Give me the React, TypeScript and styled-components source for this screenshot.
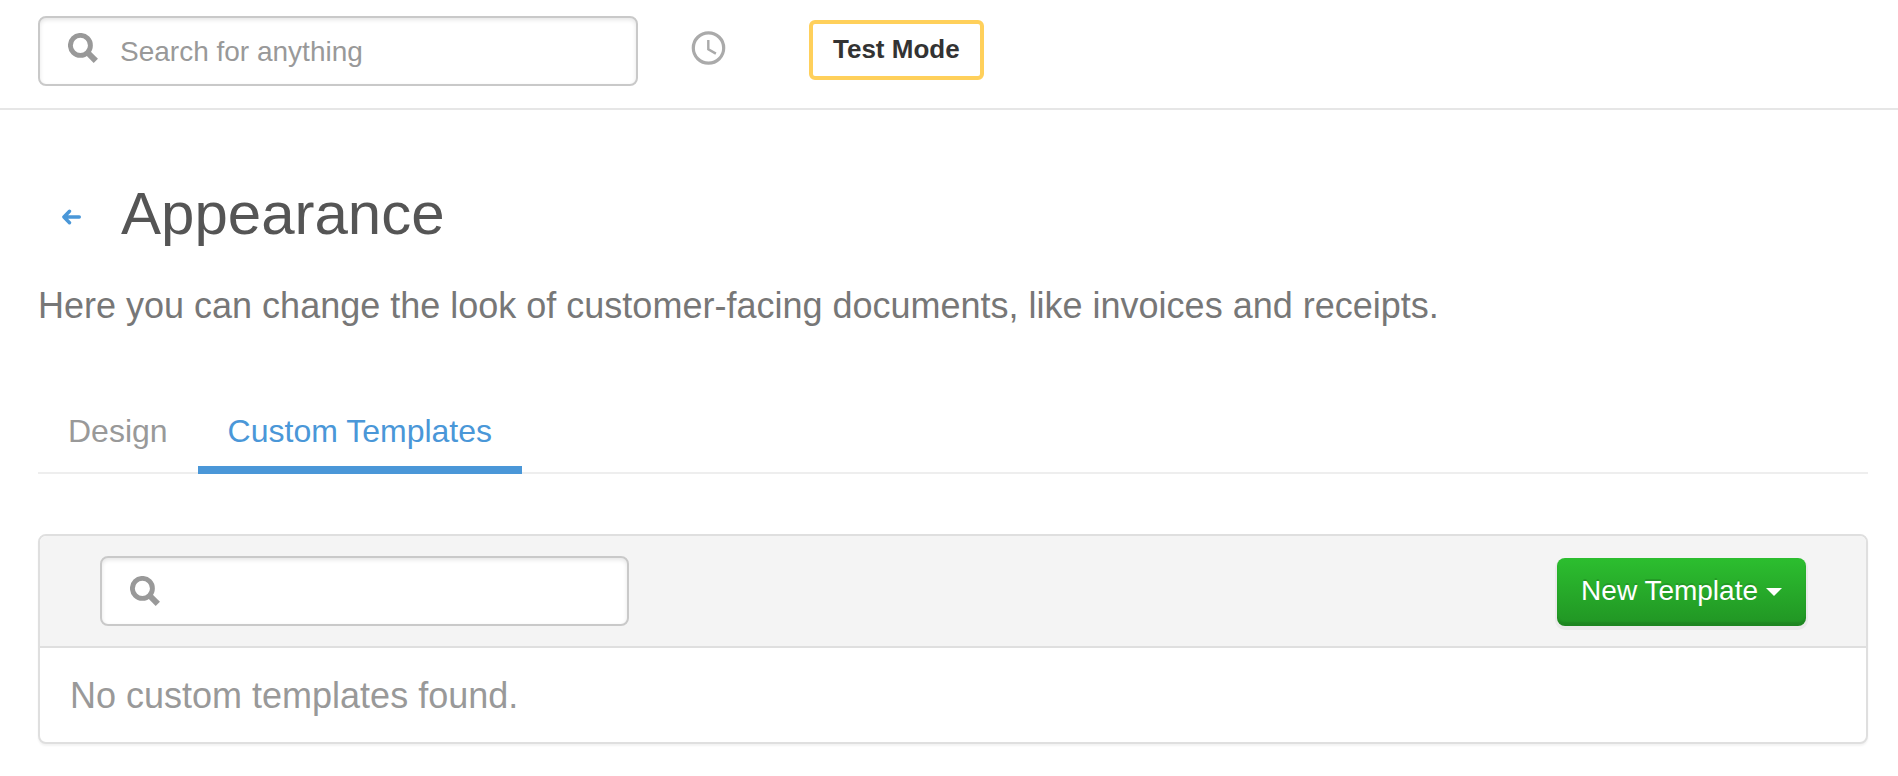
import React from 'react';
import styled, { createGlobalStyle, css } from 'styled-components';

const GlobalStyle = createGlobalStyle`
  * { box-sizing: border-box; }
  body {
    margin: 0;
    background: #fff;
    color: #555;
    font-family: "Liberation Sans", Arial, sans-serif;
    -webkit-font-smoothing: antialiased;
  }
  button, input { font-family: inherit; }
`;

const TopBar = styled.header`
  display: flex;
  align-items: flex-start;
  padding: 16px 38px 22px;
  border-bottom: 2px solid #e6e6e6;
`;

const SearchField = styled.label<{ $width: number; $raised?: boolean }>`
  display: flex;
  align-items: center;
  flex: 0 1 ${(p) => p.$width}px;
  height: 70px;
  padding: 0 28px;
  border: 2px solid #c9c9c9;
  border-radius: 8px;
  background: #fff;
  box-shadow: inset 0 2px 4px rgba(0, 0, 0, 0.1);
  color: #999;

  svg {
    flex: none;
    margin-bottom: ${(p) => (p.$raised ? 6 : 0)}px;
  }
`;

const SearchInput = styled.input`
  flex: 1;
  min-width: 0;
  height: 60px;
  margin-left: 22px;
  padding: 2px 0 0;
  border: 0;
  outline: 0;
  background: transparent;
  color: #555;
  font-size: 28px;
  &::placeholder { color: #999; opacity: 1; }
`;

const HistoryButton = styled.button`
  display: flex;
  margin: 14px 82px 0 52px;
  padding: 0;
  border: 0;
  background: none;
  color: #aaa;
  cursor: pointer;
`;

const ModeBadge = styled.button`
  height: 60px;
  margin-top: 4px;
  padding: 0 20px 2px;
  border: 4px solid #ffd05b;
  border-radius: 6px;
  background: #fff;
  color: #333;
  font-size: 26px;
  font-weight: 700;
  white-space: nowrap;
`;

const Page = styled.main`
  padding: 70px 30px 32px 38px;
`;

const TitleRow = styled.div`
  display: flex;
  align-items: center;
  padding-left: 24px;
`;

const BackLink = styled.a`
  display: flex;
  margin-right: 40px;
  padding-top: 6px;
  color: #4a97d8;
`;

const Title = styled.h1`
  margin: 0;
  color: #555;
  font-size: 60px;
  line-height: 68px;
  font-weight: 400;
`;

const Lead = styled.p`
  margin: 36px 0 0;
  color: #777;
  font-size: 36px;
  line-height: 44px;
`;

const Tabs = styled.nav`
  display: flex;
  height: 84px;
  margin-top: 62px;
  border-bottom: 2px solid #eee;
`;

const Tab = styled.a<{ $active?: boolean }>`
  height: 84px;
  padding: 20px 30px 0;
  border-bottom: 8px solid transparent;
  color: #999;
  font-size: 32px;
  line-height: 42px;
  text-decoration: none;
  ${(p) => p.$active && css`
    border-bottom-color: #4a97d8;
    color: #4a97d8;
  `}
`;

const Card = styled.section`
  margin-top: 60px;
  border: 2px solid #dfdfdf;
  border-radius: 8px;
  background: #fff;
  box-shadow: 0 2px 2px rgba(0, 0, 0, 0.05);
`;

const CardBar = styled.div`
  display: flex;
  justify-content: space-between;
  padding: 20px 60px;
  border-bottom: 2px solid #dfdfdf;
  border-radius: 6px 6px 0 0;
  background: #f4f4f4;
`;

const NewButton = styled.button`
  display: flex;
  align-items: center;
  height: 68px;
  margin-top: 2px;
  padding: 0 24px 2px;
  border: 0;
  border-radius: 8px;
  background: linear-gradient(#2cbe2f, #219524);
  box-shadow: inset 0 -4px 2px rgba(0, 0, 0, 0.1), 0 2px 0 2px rgba(0, 0, 0, 0.04);
  color: #fff;
  font-size: 28px;
  text-shadow: 0 -2px 0 rgba(0, 0, 0, 0.12);
  white-space: nowrap;
  cursor: pointer;
`;

const Caret = styled.span`
  margin: 2px 0 0 8px;
  border: 8px solid transparent;
  border-top-color: #fff;
  border-bottom: 0;
`;

const EmptyText = styled.p`
  margin: 0;
  padding: 26px 30px 24px;
  color: #999;
  font-size: 36px;
  line-height: 44px;
`;

const SearchIcon = () => (
  <svg width="30" height="30" viewBox="0 0 30 30" fill="none" stroke="currentColor" aria-hidden="true">
    <circle cx="12.4" cy="12.4" r="10" strokeWidth="4.9" />
    <path d="M18.5 18.5L27.8 27.8" strokeWidth="6" />
  </svg>
);

const ClockIcon = () => (
  <svg width="37" height="36" viewBox="0 0 37 36" fill="none" stroke="currentColor" aria-hidden="true">
    <circle cx="18.5" cy="18" r="15.2" strokeWidth="3.2" />
    <path d="M18.3 10v9.2l7.6 4.4" strokeWidth="2.4" />
  </svg>
);

const ArrowIcon = () => (
  <svg width="19" height="16" viewBox="0 0 19 16" fill="none" stroke="currentColor" strokeWidth="3.4" strokeLinecap="round" strokeLinejoin="round" aria-hidden="true">
    <path d="M17.3 8H2M7.5 2.2L1.9 8l5.6 5.8" />
  </svg>
);

export default function App() {
  return (
    <>
      <GlobalStyle />
      <TopBar>
        <SearchField $width={600} $raised>
          <SearchIcon />
          <SearchInput type="text" placeholder="Search for anything" aria-label="Search for anything" />
        </SearchField>
        <HistoryButton type="button" aria-label="Recent history">
          <ClockIcon />
        </HistoryButton>
        <ModeBadge type="button">Test Mode</ModeBadge>
      </TopBar>
      <Page>
        <TitleRow>
          <BackLink href="#settings" aria-label="Back">
            <ArrowIcon />
          </BackLink>
          <Title>Appearance</Title>
        </TitleRow>
        <Lead>Here you can change the look of customer-facing documents, like invoices and receipts.</Lead>
        <Tabs>
          <Tab href="#design">Design</Tab>
          <Tab href="#templates" $active aria-current="page">Custom Templates</Tab>
        </Tabs>
        <Card>
          <CardBar>
            <SearchField $width={529}>
              <SearchIcon />
              <SearchInput type="text" aria-label="Search templates" />
            </SearchField>
            <NewButton type="button" aria-haspopup="menu">
              New Template
              <Caret />
            </NewButton>
          </CardBar>
          <EmptyText>No custom templates found.</EmptyText>
        </Card>
      </Page>
    </>
  );
}
